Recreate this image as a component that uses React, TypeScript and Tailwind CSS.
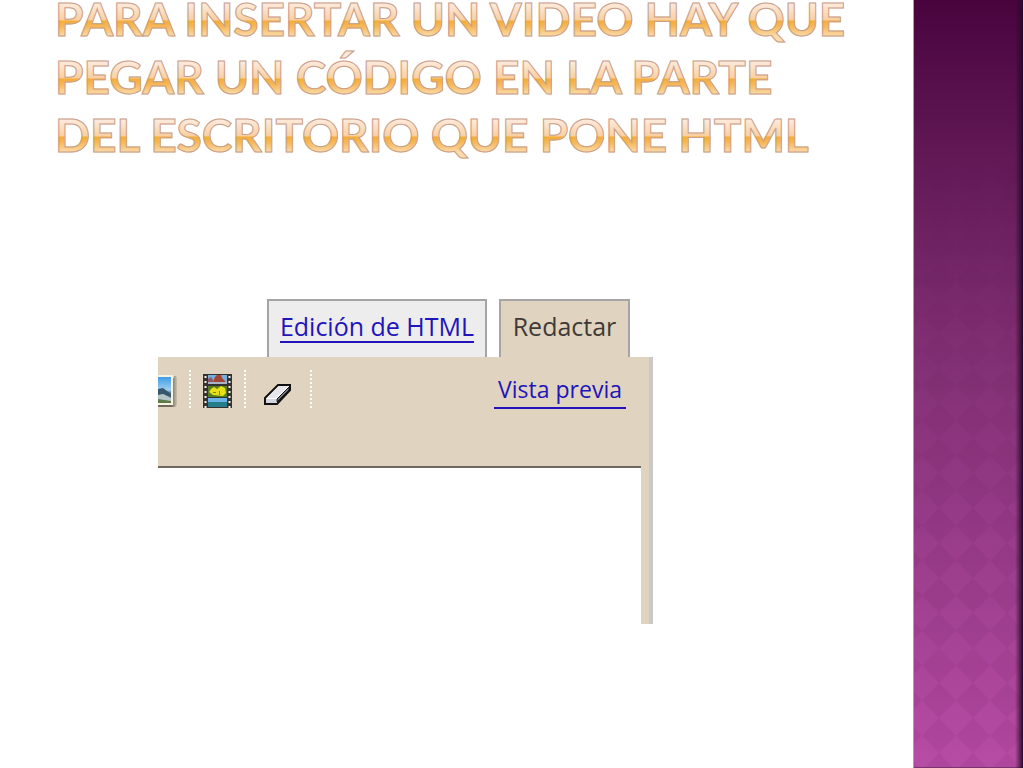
import React from 'react';

const titleLines = [
    'Para insertar un video hay que',
    'pegar un código en la parte',
    'del escritorio que pone HTML',
];

const PictureIcon: React.FC = () => (
    <svg width="20" height="38" viewBox="0 0 20 38" aria-hidden="true">
        <defs>
            <linearGradient id="photo-sky" x1="0" y1="0" x2="0" y2="1">
                <stop offset="0" stopColor="#3f9be6" />
                <stop offset="0.5" stopColor="#9fd0ef" />
                <stop offset="0.6" stopColor="#5d7f8d" />
                <stop offset="1" stopColor="#5f7a3c" />
            </linearGradient>
            <linearGradient id="photo-shadow" x1="0" y1="0" x2="1" y2="0">
                <stop offset="0.7" stopColor="#5f564b" />
                <stop offset="1" stopColor="#cabda8" />
            </linearGradient>
        </defs>
        <path d="M0 8H16V6H18L19 8V35L17 37H0Z" fill="url(#photo-shadow)" opacity="0.85" />
        <path d="M0 5H15V35H0Z" fill="#f6f3e4" />
        <path d="M0 7H13V33H0Z" fill="url(#photo-sky)" />
        <path d="M0 19L5 18L13 24V27L5 24L0 25Z" fill="#35566c" />
        <path d="M0 25L5 24L13 28V31L0 29Z" fill="#b4c4c9" />
    </svg>
);

const FilmIcon: React.FC = () => (
    <svg width="30" height="34" viewBox="0 0 30 34" aria-hidden="true">
        <path d="M0 0H29V34H0Z" fill="#343230" />
        <path d="M5 1H24V10H5Z" fill="#78aedb" />
        <path d="M10 8L12 3L14 1H18L19 4L22 7V8Z" fill="#a34532" />
        <path d="M5 5L8 3L10 6V9H5Z" fill="#8d5663" />
        <path d="M5 8H24V10H5Z" fill="#a9b3c8" />
        <path d="M5 12H24V23H5Z" fill="#557d1e" />
        <path d="M6 18L8 15L11 13L14 15L18 12L22 14L23 19L20 22L10 21Z" fill="#e6df19" />
        <path d="M10 18H13V19H10ZM16 17H17V21H16Z" fill="#79830f" />
        <path d="M5 24H24V28H5Z" fill="#6cb2ea" />
        <path d="M5 28H24V33H5Z" fill="#267f88" />
        <path d="M2.500 2V34M26.500 2V34" stroke="#f5f2e9" strokeWidth="2" strokeDasharray="2 3" />
    </svg>
);

const EraserIcon: React.FC = () => (
    <svg width="30" height="24" viewBox="0 0 30 24" aria-hidden="true">
        <path d="M2 16L15 3H27V8L14 22H2Z" fill="#fff" stroke="#111" strokeWidth="2" />
        <path d="M4 16L16 4H25L13 16Z" fill="#e6e6ea" />
        <path d="M14 17L26 5V8L14 20Z" fill="#77777c" stroke="#111" strokeWidth="1" />
        <path d="M3 17H13V21H3Z" fill="#d5d5df" />
    </svg>
);

const Divider: React.FC = () => (
    <span className="h-[38px] border-l-2 border-dotted border-white" />
);

const SidePattern: React.FC = () => (
    <svg className="h-full w-full" aria-hidden="true">
        <defs>
            <pattern id="diamonds" width="34" height="35" x="8" y="18" patternUnits="userSpaceOnUse">
                <path d="M17 0L34 17.500L17 35L0 17.500Z" fill="#400038" fillOpacity="0.06" />
            </pattern>
            <linearGradient id="diamond-fade" x1="0" y1="0" x2="0" y2="1">
                <stop offset="0.2" stopColor="#000" />
                <stop offset="0.7" stopColor="#fff" />
            </linearGradient>
            <mask id="fade">
                <rect width="100%" height="100%" fill="url(#diamond-fade)" />
            </mask>
        </defs>
        <rect width="100%" height="100%" fill="url(#diamonds)" mask="url(#fade)" />
    </svg>
);

export default function App() {
    return (
        <div className="flex min-h-screen w-full overflow-hidden bg-white">
            <main className="min-w-0 flex-1">
                {/* Title */}
                <h1 className="-mt-[10px] pl-[55px] font-['Lato','Trebuchet_MS',sans-serif] text-[46px] leading-[58px] font-bold whitespace-nowrap uppercase">
                    {titleLines.map((line) => (
                        <span
                            key={line}
                            className="block w-fit bg-[linear-gradient(to_bottom,#fdeadb_24%,#f9d0a2_51%,#f5ad36_54%,#f6b858_63%,#fbdcab_80%)] bg-clip-text text-transparent [-webkit-text-stroke:1px_#c9a08c]"
                        >
                            {line}
                        </span>
                    ))}
                </h1>

                {/* Editor */}
                <section className="mt-[135px] ml-[158px] w-[495px] font-['Open_Sans',sans-serif] text-[25px]">
                    <div className="flex gap-3 pl-[109px]">
                        <div className="flex h-[58px] w-[220px] justify-center border-2 border-b-0 border-[#a5a5a5] bg-[#ededed] pt-[9px]">
                            <a href="#html" className="h-[33px] border-b-2 border-[#2214bb] leading-[33px] whitespace-nowrap text-[#2214bb]">
                                Edición de HTML
                            </a>
                        </div>
                        <button className="h-[58px] w-[131px] border-2 border-b-0 border-[#a5a5a5] bg-[#e0d4c0] pb-1 text-[#403a37]">
                            Redactar
                        </button>
                    </div>

                    <div className="border-r-4 border-[#cac9c9] bg-[#e0d4c0] pr-2">
                        <div className="flex h-[111px] items-start border-b-2 border-[#70675d] pt-[13px]">
                            <button aria-label="Imagen"><PictureIcon /></button>
                            <span className="ml-[11px] flex"><Divider /></span>
                            <button aria-label="Video" className="mt-1 ml-3"><FilmIcon /></button>
                            <span className="ml-[11px] flex"><Divider /></span>
                            <button aria-label="Borrar formato" className="mt-3 ml-[17px]"><EraserIcon /></button>
                            <span className="ml-[17px] flex"><Divider /></span>
                            <a href="#preview" className="mr-[15px] ml-auto h-[39px] border-b-2 border-[#2214bb] px-1 text-[23px] leading-[38px] whitespace-nowrap text-[#2214bb]">
                                Vista previa
                            </a>
                        </div>
                        <div className="h-[156px] bg-white" />
                    </div>
                </section>
            </main>

            {/* Side band */}
            <aside className="relative w-[111px] shrink-0 border-x border-r-[#e3d3e0] border-l-[#c390bd] bg-linear-to-b from-[#49043e] via-[#802f73] via-45% to-[#b74ca5]">
                <div className="absolute inset-0 border-b border-[#7a3570]">
                    <SidePattern />
                </div>
                <div className="absolute inset-y-0 right-0 w-2 bg-linear-to-r from-transparent to-[#2b0a27]" />
            </aside>
        </div>
    );
}
